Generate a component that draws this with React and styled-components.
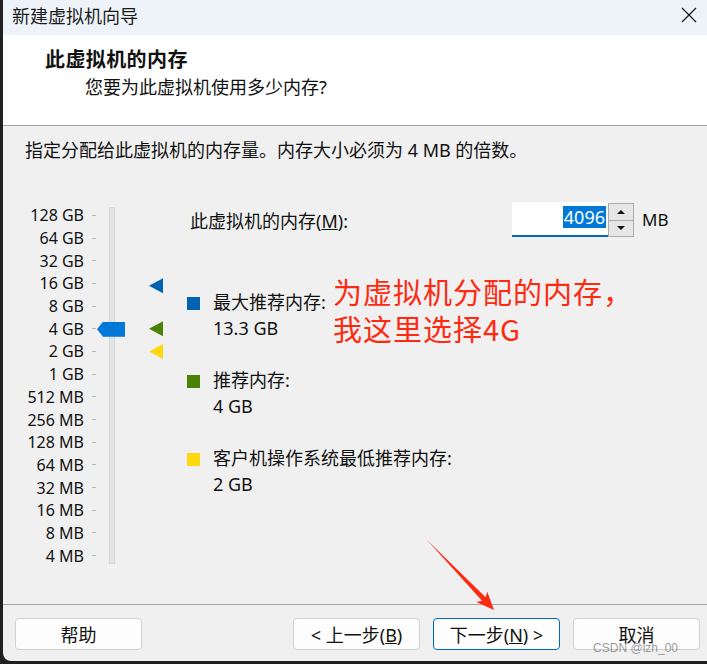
import React from 'react'
import styled, { createGlobalStyle } from 'styled-components'

const GlobalStyle = createGlobalStyle`
  html, body {
    margin: 0;
    padding: 0;
    background: #202020;
  }
  * {
    box-sizing: border-box;
  }
`;

const Frame = styled.div`
  width: 707px;
  height: 664px;
  padding: 0 0 3px 3px;
  background: #202020;
  font-family: "Noto Sans", "Noto Sans CJK SC", sans-serif;
  color: #111;
`;

const Window = styled.div`
  position: relative;
  height: 661px;
  display: flex;
  flex-direction: column;
  background: #f0f0f0;
  border-bottom-left-radius: 8px;
  overflow: hidden;
`;

const TitleBar = styled.div`
  height: 35px;
  flex: none;
  display: flex;
  align-items: center;
  justify-content: space-between;
  padding: 0 10px 5px 9px;
  background: #eef3f9;
  font-size: 18px;
  color: #1a1a1a;
`;

const CloseButton = styled.div`
  width: 16px;
  height: 16px;
  display: flex;
`;

const Header = styled.div`
  height: 91px;
  flex: none;
  background: #fff;
  border-bottom: 1px solid #a3a3a3;
  padding: 13px 0 0 42px;
`;

const Heading = styled.div`
  font-size: 20px;
  line-height: 24px;
  font-weight: 700;
  letter-spacing: 0.4px;
`;

const SubHeading = styled.div`
  margin: 3px 0 0 40px;
  font-size: 18px;
  line-height: 24px;
`;

const Body = styled.div`
  flex: 1;
  padding: 12px 0 0 22px;
`;

const Instruction = styled.div`
  font-size: 18px;
  line-height: 24px;
`;

const Main = styled.div`
  margin-top: 40px;
  display: flex;
  align-items: flex-start;
`;

const Slider = styled.div`
  position: relative;
  display: flex;
  align-items: flex-start;
  padding-top: 2px;
`;

const Scale = styled.div`
  width: 71px;
  display: flex;
  flex-direction: column;
`;

const ScaleRow = styled.div`
  height: 22.7px;
  display: flex;
  align-items: center;
  justify-content: flex-end;
  gap: 8px;
  font-size: 16px;
  white-space: nowrap;
`;

const Tick = styled.span`
  width: 4px;
  height: 1px;
  background: #b8b8b8;
`;

const Track = styled.div`
  width: 6px;
  height: 357px;
  margin: 3px 0 0 13px;
  background: #e3e5e4;
  border: 1px solid #d3d6d5;
`;

const Thumb = styled.div`
  position: absolute;
  left: 72px;
  width: 28px;
  height: 15px;
  background: #0078d7;
  clip-path: polygon(0 50%, 6px 0, 100% 0, 100% 100%, 6px 100%);
`;

const Markers = styled.div`
  position: relative;
  width: 48px;
  height: 360px;
`;

const Marker = styled.div`
  position: absolute;
  left: 34px;
  width: 14px;
  height: 15px;
  background: ${p => p.$color};
  clip-path: polygon(0 50%, 100% 0, 100% 100%);
`;

const Panel = styled.div`
  margin-left: 24px;
  display: flex;
  flex-direction: column;
`;

const MemoryRow = styled.div`
  height: 35px;
  display: flex;
  align-items: center;
  font-size: 18px;
`;

const MemoryLabel = styled.div`
  width: 325px;
  padding-left: 3px;
`;

const NumberBox = styled.div`
  width: 96px;
  height: 35px;
  display: flex;
  align-items: center;
  justify-content: flex-end;
  padding: 0 2px 4px 0;
  background: #fff;
  border-bottom: 2px solid #0067c0;
  font-size: 18px;
`;

const Selected = styled.span`
  background: #0078d7;
  color: #fff;
  line-height: 22px;
  padding: 0 1px;
`;

const Spin = styled.div`
  width: 26px;
  height: 34px;
  display: flex;
  flex-direction: column;
  margin-top: 1px;
`;

const SpinButton = styled.div`
  flex: 1;
  display: flex;
  align-items: center;
  justify-content: center;
  background: #e6e6e6;
  border: 1px solid #adadad;
  & + & {
    border-top: none;
  }
`;

const Arrow = styled.span`
  width: 0;
  height: 0;
  border-left: 4px solid transparent;
  border-right: 4px solid transparent;
  ${p => (p.$down ? 'border-top: 4px solid #111;' : 'border-bottom: 4px solid #111;')}
`;

const Unit = styled.div`
  margin-left: 8px;
  font-size: 17px;
`;

const Legend = styled.div`
  margin-top: 52px;
  display: flex;
  flex-direction: column;
  align-items: flex-start;
  gap: 26px;
`;

const LegendItem = styled.div`
  display: flex;
  align-items: flex-start;
  gap: 13px;
`;

const Swatch = styled.span`
  width: 13px;
  height: 13px;
  margin-top: 8px;
  background: ${p => p.$color};
`;

const LegendText = styled.div`
  display: flex;
  flex-direction: column;
  align-items: flex-start;
  font-size: 18px;
  line-height: 26px;
`;

const Footer = styled.div`
  height: 57px;
  flex: none;
  border-top: 1px solid #a3a3a3;
  display: flex;
  align-items: flex-start;
  padding: 13px 7px 0 12px;
  gap: 13px;
`;

const Button = styled.button`
  width: 127px;
  height: 32px;
  padding: 0;
  background: #fdfdfd;
  border: 1px solid ${p => (p.$primary ? '#0067c0' : '#d0d0d0')};
  border-radius: 4px;
  font-family: inherit;
  font-size: 18px;
  color: #111;
  &:first-child {
    margin-right: auto;
  }
`;

const Annotation = styled.div`
  position: absolute;
  left: 330px;
  top: 273px;
  font-size: 29px;
  line-height: 37px;
  letter-spacing: 1px;
  color: #fe2a10;
  font-family: "Noto Sans CJK SC", sans-serif;
`;

const ArrowSvg = styled.svg`
  position: absolute;
  left: 422px;
  top: 535px;
`;

const Watermark = styled.div`
  position: absolute;
  right: 29px;
  bottom: 6px;
  font-family: "Liberation Sans", sans-serif;
  font-size: 12px;
  color: rgba(110, 110, 110, 0.7);
`;

const scale = ['128 GB', '64 GB', '32 GB', '16 GB', '8 GB', '4 GB', '2 GB', '1 GB',
  '512 MB', '256 MB', '128 MB', '64 MB', '32 MB', '16 MB', '8 MB', '4 MB'];

const ROW = 22.7;
const rowCenter = pos => 13.35 + pos * ROW;

const markers = [
  { pos: 3.1, color: '#0063b1' },
  { pos: 5, color: '#498205' },
  { pos: 6, color: '#fdd80f' },
];

const legend = [
  { color: '#0063b1', label: '最大推荐内存:', value: '13.3 GB' },
  { color: '#498205', label: '推荐内存:', value: '4 GB' },
  { color: '#fdd80f', label: '客户机操作系统最低推荐内存:', value: '2 GB' },
];

export default function App() {
  return (
    <Frame>
      <GlobalStyle />
      <Window>
        <TitleBar>
          <span>新建虚拟机向导</span>
          <CloseButton>
            <svg width="16" height="16" viewBox="0 0 16 16">
              <path d="M1 1 L15 15 M15 1 L1 15" stroke="#1a1a1a" strokeWidth="1.3" fill="none" />
            </svg>
          </CloseButton>
        </TitleBar>

        <Header>
          <Heading>此虚拟机的内存</Heading>
          <SubHeading>您要为此虚拟机使用多少内存?</SubHeading>
        </Header>

        <Body>
          <Instruction>指定分配给此虚拟机的内存量。内存大小必须为 4 MB 的倍数。</Instruction>
          <Main>
            <Slider>
              <Scale>
                {scale.map(s => (
                  <ScaleRow key={s}>
                    {s}
                    <Tick />
                  </ScaleRow>
                ))}
              </Scale>
              <Track />
              <Markers>
                {markers.map(m => (
                  <Marker key={m.color} $color={m.color} style={{ top: rowCenter(m.pos) - 9.5 }} />
                ))}
              </Markers>
              <Thumb style={{ top: rowCenter(5) - 7 }} />
            </Slider>

            <Panel>
              <MemoryRow>
                <MemoryLabel>此虚拟机的内存(<u>M</u>):</MemoryLabel>
                <NumberBox>
                  <Selected>4096</Selected>
                </NumberBox>
                <Spin>
                  <SpinButton><Arrow /></SpinButton>
                  <SpinButton><Arrow $down /></SpinButton>
                </Spin>
                <Unit>MB</Unit>
              </MemoryRow>

              <Legend>
                {legend.map(l => (
                  <LegendItem key={l.label}>
                    <Swatch $color={l.color} />
                    <LegendText>
                      <span>{l.label}</span>
                      <span>{l.value}</span>
                    </LegendText>
                  </LegendItem>
                ))}
              </Legend>
            </Panel>
          </Main>
        </Body>

        <Footer>
          <Button>帮助</Button>
          <Button>&lt; 上一步(<u>B</u>)</Button>
          <Button $primary>下一步(<u>N</u>) &gt;</Button>
          <Button>取消</Button>
        </Footer>

        <Annotation>
          为虚拟机分配的内存，<br />
          我这里选择4G
        </Annotation>

        <ArrowSvg width="75" height="80" viewBox="0 0 75 80">
          <polygon
            points="2,5 57,65.7 51.3,66.9 69,75 62.3,56.7 60.6,62.3"
            fill="#fe2a10"
          />
        </ArrowSvg>

        <Watermark>CSDN @lzh_00</Watermark>
      </Window>
    </Frame>
  );
}
